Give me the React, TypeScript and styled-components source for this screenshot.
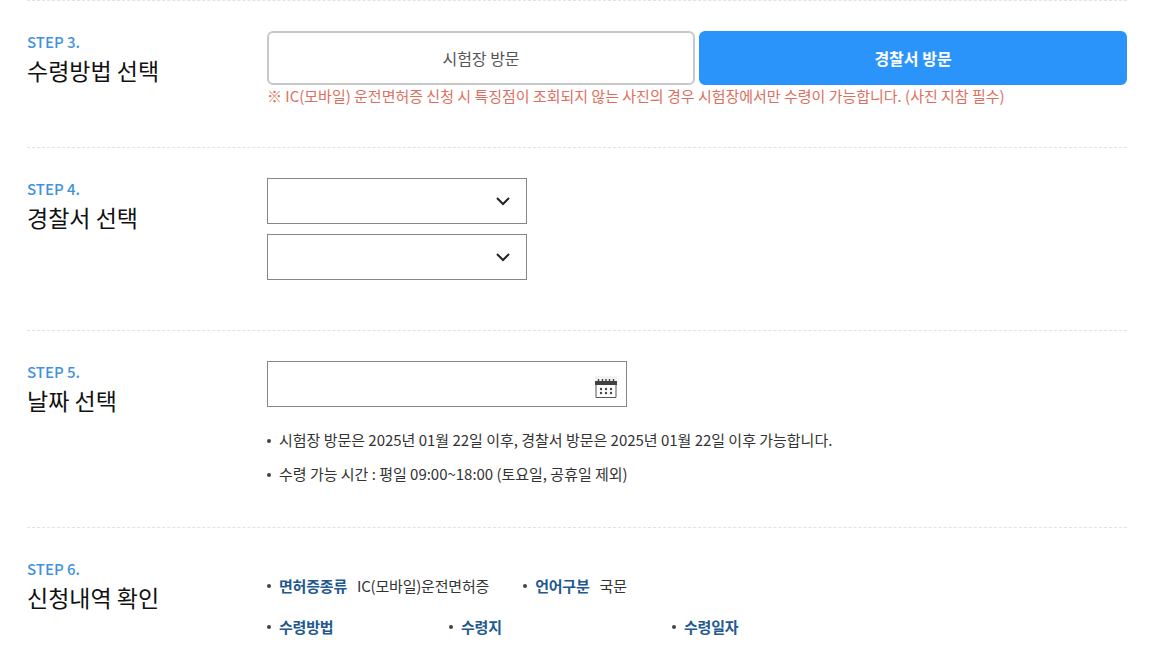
import React from "react";
import styled, { createGlobalStyle } from "styled-components";

const GlobalStyle = createGlobalStyle`
  html, body {
    margin: 0;
    padding: 0;
    height: 669px;
    overflow: hidden;
    background: #fff;
    font-family: "Noto Sans CJK KR", "Noto Sans", sans-serif;
  }
  * { box-sizing: border-box; }
`;

const Page = styled.div`
  width: 1100px;
  margin-left: 27px;
`;

const Section = styled.section<{ $height: number }>`
  display: grid;
  grid-template-columns: 240px 1fr;
  height: ${(p) => p.$height}px;
  padding-top: 30px;
  border-top: 1px dashed #e2e2e2;
`;

const Heading = styled.div`
  display: flex;
  flex-direction: column;
`;

const Step = styled.span`
  font-size: 15px;
  line-height: 22px;
  font-weight: 500;
  color: #3f92de;
`;

const Title = styled.h2`
  margin: 0;
  font-size: 23px;
  line-height: 34px;
  font-weight: 400;
  color: #111;
`;

const ButtonRow = styled.div`
  display: flex;
  gap: 4px;
`;

const VisitButton = styled.button<{ $active?: boolean }>`
  flex: 1;
  height: 54px;
  padding: 0;
  border: 2px solid ${(p) => (p.$active ? "#2b94fb" : "#c8c8c8")};
  border-radius: 6px;
  background: ${(p) => (p.$active ? "#2b94fb" : "#fff")};
  color: ${(p) => (p.$active ? "#fff" : "#555")};
  font-family: inherit;
  font-size: 16px;
  font-weight: ${(p) => (p.$active ? 700 : 400)};
`;

const Notice = styled.p`
  margin: 0;
  font-size: 15px;
  line-height: 22px;
  letter-spacing: -0.015px;
  color: #dd6f60;
`;

const Stack = styled.div`
  display: flex;
  flex-direction: column;
  align-items: flex-start;
  gap: 10px;
`;

const Field = styled.div<{ $width: number }>`
  display: flex;
  align-items: center;
  justify-content: flex-end;
  width: ${(p) => p.$width}px;
  height: 46px;
  padding-right: 9px;
  border: 1px solid #868686;
  background: #fff;
`;

const Chevron = styled.svg`
  width: 16px;
  height: 10px;
  margin-right: 6px;
`;

const Calendar = styled.svg`
  width: 22px;
  height: 22px;
  margin-top: 6px;
`;

const Hints = styled.ul`
  list-style: none;
  margin: 16px 0 0;
  padding: 0;
`;

const Hint = styled.li`
  position: relative;
  height: 34px;
  padding-left: 12px;
  font-size: 15px;
  line-height: 34px;
  letter-spacing: -0.02px;
  color: #333;

  &::before {
    content: "";
    position: absolute;
    left: 0;
    top: 16px;
    width: 4px;
    height: 4px;
    border-radius: 50%;
    background: #444;
  }
`;

const SummaryRow = styled.dl<{ $columns?: string }>`
  display: ${(p) => (p.$columns ? "grid" : "flex")};
  grid-template-columns: ${(p) => p.$columns ?? "none"};
  margin: 0;
  height: 41px;
  align-items: center;
`;

const SummaryItem = styled.div<{ $gap?: number }>`
  position: relative;
  display: flex;
  gap: 10px;
  padding-left: 12px;
  margin-right: ${(p) => p.$gap ?? 0}px;
  font-size: 15px;
  line-height: 22px;
  letter-spacing: -0.2px;

  &::before {
    content: "";
    position: absolute;
    left: 0;
    top: 9px;
    width: 4px;
    height: 4px;
    border-radius: 50%;
    background: #444;
  }
`;

const SummaryLabel = styled.dt`
  font-weight: 700;
  color: #23588f;
`;

const SummaryValue = styled.dd`
  margin: 0;
  color: #333;
`;

const Summary = styled.div`
  margin-top: 7px;
`;

const ChevronIcon = () => (
  <Chevron viewBox="0 0 16 10">
    <path d="M2 2l6 6 6-6" fill="none" stroke="#222" strokeWidth="2" />
  </Chevron>
);

const CalendarIcon = () => (
  <Calendar viewBox="0 0 22 22">
    <rect x="0" y="0" width="22" height="5" fill="#f2f2f2" />
    <rect x="0" y="5" width="22" height="4" fill="#404040" />
    <path d="M3.5 3v3M7.5 3v3M11 3v3M14.5 3v3M18.5 3v3" stroke="#404040" strokeWidth="1.4" />
    <path d="M1 9v12.5h20V9" fill="#fff" stroke="#555" strokeWidth="1" />
    {[5, 10, 15].map((x) => (
      <React.Fragment key={x}>
        <circle cx={x + 1} cy="13" r="1.2" fill="#444" />
        <circle cx={x + 1} cy="17" r="1.2" fill="#444" />
      </React.Fragment>
    ))}
  </Calendar>
);

export default function App() {
  return (
    <>
      <GlobalStyle />
      <Page>
        <Section $height={147}>
          <Heading>
            <Step>STEP 3.</Step>
            <Title>수령방법 선택</Title>
          </Heading>
          <div>
            <ButtonRow>
              <VisitButton>시험장 방문</VisitButton>
              <VisitButton $active>경찰서 방문</VisitButton>
            </ButtonRow>
            <Notice>※ IC(모바일) 운전면허증 신청 시 특징점이 조회되지 않는 사진의 경우 시험장에서만 수령이 가능합니다. (사진 지참 필수)</Notice>
          </div>
        </Section>
        <Section $height={183}>
          <Heading>
            <Step>STEP 4.</Step>
            <Title>경찰서 선택</Title>
          </Heading>
          <Stack>
            <Field $width={260}><ChevronIcon /></Field>
            <Field $width={260}><ChevronIcon /></Field>
          </Stack>
        </Section>
        <Section $height={197}>
          <Heading>
            <Step>STEP 5.</Step>
            <Title>날짜 선택</Title>
          </Heading>
          <div>
            <Field $width={360}><CalendarIcon /></Field>
            <Hints>
              <Hint>시험장 방문은 2025년 01월 22일 이후, 경찰서 방문은 2025년 01월 22일 이후 가능합니다.</Hint>
              <Hint>수령 가능 시간 : 평일 09:00~18:00 (토요일, 공휴일 제외)</Hint>
            </Hints>
          </div>
        </Section>
        <Section $height={142}>
          <Heading>
            <Step>STEP 6.</Step>
            <Title>신청내역 확인</Title>
          </Heading>
          <Summary>
            <SummaryRow>
              <SummaryItem $gap={34}>
                <SummaryLabel>면허증종류</SummaryLabel>
                <SummaryValue>IC(모바일)운전면허증</SummaryValue>
              </SummaryItem>
              <SummaryItem>
                <SummaryLabel>언어구분</SummaryLabel>
                <SummaryValue>국문</SummaryValue>
              </SummaryItem>
            </SummaryRow>
            <SummaryRow $columns="182px 223px 1fr">
              <SummaryItem><SummaryLabel>수령방법</SummaryLabel></SummaryItem>
              <SummaryItem><SummaryLabel>수령지</SummaryLabel></SummaryItem>
              <SummaryItem><SummaryLabel>수령일자</SummaryLabel></SummaryItem>
            </SummaryRow>
          </Summary>
        </Section>
      </Page>
    </>
  );
}
